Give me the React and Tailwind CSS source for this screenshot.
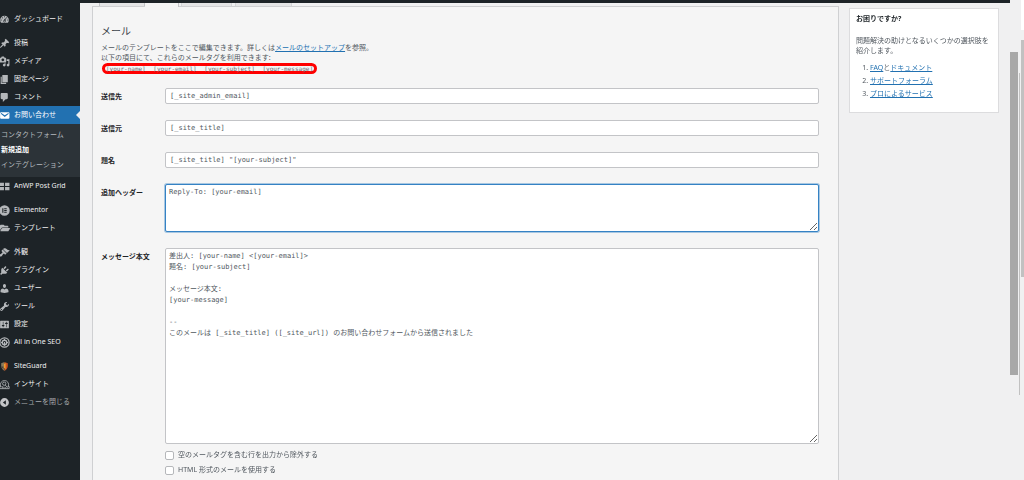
import React from 'react';
import { FaFolderOpen } from 'react-icons/fa';

const ICONS = {
  dashboard:
    'M3.76 16h12.48c1.1-1.37 1.76-3.11 1.76-5 0-4.42-3.58-8-8-8s-8 3.58-8 8c0 1.89.66 3.63 1.76 5zM10 4c.55 0 1 .45 1 1s-.45 1-1 1-1-.45-1-1 .45-1 1-1zM6 6c.55 0 1 .45 1 1s-.45 1-1 1-1-.45-1-1 .45-1 1-1zm8 0c.55 0 1 .45 1 1s-.45 1-1 1-1-.45-1-1 .45-1 1-1zm-5.37 5.55L12 7v6c0 1.1-.9 2-2 2s-2-.9-2-2c0-.57.24-1.08.63-1.45zM4 10c.55 0 1 .45 1 1s-.45 1-1 1-1-.45-1-1 .45-1 1-1zm12 0c.55 0 1 .45 1 1s-.45 1-1 1-1-.45-1-1 .45-1 1-1zm-5 3c0-.55-.45-1-1-1s-1 .45-1 1 .45 1 1 1 1-.45 1-1z',
  pin: 'M10.44 3.02l1.82-1.82 6.36 6.35-1.83 1.82c-1.05-.68-2.48-.57-3.41.36l-.75.75c-.92.93-1.04 2.35-.35 3.41l-1.83 1.82-2.41-2.41-2.8 2.79c-.42.42-3.38 2.71-3.8 2.29s1.86-3.39 2.28-3.81l2.79-2.79L4.1 9.36l1.83-1.82c1.05.69 2.48.57 3.4-.36l.75-.75c.93-.92 1.05-2.35.36-3.41z',
  media:
    'M13 11V4c0-.55-.45-1-1-1h-1.67L9 1H5L3.67 3H2c-.55 0-1 .45-1 1v7c0 .55.45 1 1 1h10c.55 0 1-.45 1-1zM7 4.5c1.38 0 2.5 1.12 2.5 2.5S8.38 9.5 7 9.5 4.5 8.38 4.5 7 5.62 4.5 7 4.5zM14 6h5v10.5c0 1.38-1.12 2.5-2.5 2.5S14 17.88 14 16.5s1.12-2.5 2.5-2.5c.17 0 .34.02.5.05V9h-3V6zm-4 8.05V13h2v3.5c0 1.38-1.12 2.5-2.5 2.5S7 17.88 7 16.5 8.12 14 9.5 14c.17 0 .34.02.5.05z',
  page: 'M6 15V2h10v13H6zm-1 1h8v2H3V5h2v11z',
  comment: 'M5 2h9c1.1 0 2 .9 2 2v7c0 1.1-.9 2-2 2h-2l-5 5v-5H5c-1.1 0-2-.9-2-2V4c0-1.1.9-2 2-2z',
  email:
    'M3.87 4h13.25C18.37 4 19 4.59 19 5.79v8.42c0 1.19-.63 1.79-1.88 1.79H3.87c-1.25 0-1.88-.6-1.88-1.79V5.79c0-1.2.63-1.79 1.88-1.79zm6.62 8.6l6.74-5.53c.24-.2.43-.66.13-1.07-.29-.41-.82-.42-1.17-.17l-5.7 3.86L4.8 5.83c-.35-.25-.88-.24-1.17.17-.3.41-.11.87.13 1.07z',
  grid: 'M1 3h8v6H1zM11 3h8v6h-8zM1 11h8v6H1zM11 11h8v6h-8z',
  elementor: 'M10 .5a9.5 9.5 0 1 0 0 19a9.5 9.5 0 1 0 0-19zM6 6h2v8H6zM9.5 6H14v1.7H9.5zM9.5 9.2H14v1.7H9.5zM9.5 12.3H14V14H9.5z',
  brush:
    'M14.48 11.06L7.41 3.99l1.5-1.5c.5-.56 2.3-.47 3.51.32 1.21.8 1.43 1.28 2.91 2.1 1.18.64 2.45 1.26 4.45.85zm-.71.71L6.7 4.7 4.93 6.47c-.39.39-.39 1.02 0 1.41l1.06 1.06c.39.39.39 1.03 0 1.42-.6.6-1.43 1.11-2.21 1.69-.35.26-.7.53-1.01.84C1.43 14.23.4 16.08 1.4 17.07c.99 1 2.84-.03 4.18-1.36.31-.31.58-.66.85-1.02.57-.78 1.08-1.61 1.69-2.21.39-.39 1.02-.39 1.41 0l1.06 1.06c.39.39 1.02.39 1.41 0z',
  plugin:
    'M13.11 4.36L9.87 7.6 8 5.73l3.24-3.24c.35-.34 1.05-.2 1.56.32.52.51.66 1.21.31 1.55zm-8 1.77l.91-1.12 9.01 9.01-1.19.84c-.71.71-2.63 1.16-3.82 1.16H6.14L4.9 17.26c-.59.59-1.54.59-2.12 0-.59-.58-.59-1.53 0-2.12l1.24-1.24v-3.88c0-1.13.4-3.19 1.09-3.89zm7.26 3.97l3.24-3.24c.34-.35 1.04-.21 1.55.31.52.51.66 1.21.31 1.55l-3.24 3.25z',
  user: 'M10 9.25c-2.27 0-2.73-3.44-2.73-3.44C7 4.02 7.82 2 9.97 2c2.16 0 2.98 2.02 2.71 3.81 0 0-.41 3.44-2.68 3.44zm0 2.57L12.72 10c2.39 0 4.52 2.33 4.52 4.53v2.49s-3.65 1.13-7.24 1.13c-3.65 0-7.24-1.13-7.24-1.13v-2.49c0-2.25 1.94-4.48 4.47-4.48z',
  tools:
    'M16.68 9.77c-1.34 1.34-3.3 1.67-4.95.99l-5.41 6.52c-.99.99-2.59.99-3.58 0s-.99-2.59 0-3.57l6.52-5.42c-.68-1.65-.35-3.61.99-4.95 1.28-1.28 3.12-1.62 4.72-1.06l-2.89 2.89 2.82 2.82 2.86-2.87c.53 1.58.18 3.39-1.08 4.65zM3.81 16.21c.4.39 1.04.39 1.43 0 .4-.4.4-1.04 0-1.43-.39-.4-1.03-.4-1.43 0-.39.39-.39 1.03 0 1.43z',
  settings:
    'M18 16V4c0-.55-.45-1-1-1H3c-.55 0-1 .45-1 1v12c0 .55.45 1 1 1h14c.55 0 1-.45 1-1zM8 11h1c.55 0 1 .45 1 1s-.45 1-1 1H8v1.5c0 .28-.22.5-.5.5s-.5-.22-.5-.5V13H6c-.55 0-1-.45-1-1s.45-1 1-1h1V5.5c0-.28.22-.5.5-.5s.5.22.5.5V11zm5-2h-1c-.55 0-1-.45-1-1s.45-1 1-1h1V5.5c0-.28.22-.5.5-.5s.5.22.5.5V7h1c.55 0 1 .45 1 1s-.45 1-1 1h-1v5.5c0 .28-.22.5-.5.5s-.5-.22-.5-.5V9z',
  collapse: 'M10 2a8 8 0 1 0 0 16a8 8 0 1 0 0-16zM12.5 6v8L7 10z',
};

const Dashicon = ({ name }) => (
  <svg viewBox="0 0 20 20" className="size-[11px]" fill="currentColor" fillRule="evenodd">
    <path d={ICONS[name]} />
  </svg>
);

const SeoIcon = () => (
  <svg viewBox="0 0 20 20" className="size-[11px]" fill="none" stroke="currentColor">
    <circle cx="10" cy="10" r="8.4" strokeWidth="2.2" />
    <circle cx="10" cy="10" r="4" strokeWidth="2.6" />
    <path d="M10 3.5v2M10 9v7M3.5 10h2M14.5 10h2" strokeWidth="1.8" />
  </svg>
);

const ShieldIcon = () => (
  <svg viewBox="0 0 20 20" className="size-[11px]">
    <path d="M4 4l6-2v16c-3-2-6-5-6-9z" fill="#8a7a5c" />
    <path d="M10 2l6 2v5c0 4-3 7-6 9z" fill="#c9501e" />
    <path d="M9 5l3-1v11l-3-3z" fill="#f0a030" />
    <path d="M4 10h4v5z" fill="#4a4038" />
  </svg>
);

const InsightIcon = () => (
  <svg viewBox="0 0 20 20" className="size-[11px]" fill="none" stroke="currentColor" strokeWidth="1.5">
    <path d="M3 13a7.5 7.5 0 1 1 14 0" />
    <path d="M1.5 17.5h17v-4h-3M1.5 17.5v-4h3" />
    <circle cx="9.5" cy="8.5" r="3" />
    <path d="M11.5 11l4 5M6 17v-4M9 17v-3M12 17v-2" />
  </svg>
);

const menuGroups = [
  [{ label: 'ダッシュボード', icon: <Dashicon name="dashboard" /> }],
  [
    { label: '投稿', icon: <Dashicon name="pin" /> },
    { label: 'メディア', icon: <Dashicon name="media" /> },
    { label: '固定ページ', icon: <Dashicon name="page" /> },
    { label: 'コメント', icon: <Dashicon name="comment" /> },
    {
      label: 'お問い合わせ',
      icon: <Dashicon name="email" />,
      active: true,
      children: ['コンタクトフォーム', '新規追加', 'インテグレーション'],
    },
    { label: 'AnWP Post Grid', icon: <Dashicon name="grid" /> },
  ],
  [
    { label: 'Elementor', icon: <Dashicon name="elementor" /> },
    { label: 'テンプレート', icon: <FaFolderOpen className="size-[10px]" /> },
  ],
  [
    { label: '外観', icon: <Dashicon name="brush" /> },
    { label: 'プラグイン', icon: <Dashicon name="plugin" /> },
    { label: 'ユーザー', icon: <Dashicon name="user" /> },
    { label: 'ツール', icon: <Dashicon name="tools" /> },
    { label: '設定', icon: <Dashicon name="settings" /> },
    { label: 'All in One SEO', icon: <SeoIcon /> },
  ],
  [
    { label: 'SiteGuard', icon: <ShieldIcon /> },
    { label: 'インサイト', icon: <InsightIcon /> },
  ],
];

const MenuItem = ({ item }) => (
  <li>
    <a
      href="#"
      className={
        item.active
          ? 'relative flex h-[18px] items-center gap-1 bg-[#2271b1] text-white'
          : 'flex h-[18px] items-center gap-1 text-[#f0f0f1]'
      }
    >
      <span className={item.active ? '-ml-px flex w-[11px] justify-center' : '-ml-px flex w-[11px] justify-center text-[#b4b7ba]'}>
        {item.icon}
      </span>
      {item.label}
      {item.active && (
        <span className="absolute top-[5px] right-0 size-0 border-y-4 border-r-4 border-y-transparent border-r-[#f0f0f1]" />
      )}
    </a>
    {item.children && (
      <ul className="bg-[#2c3338] py-1 text-[#b4b9be]">
        {item.children.map((child) => (
          <li key={child}>
            <a
              href="#"
              className={
                child === '新規追加'
                  ? 'flex h-[15px] items-center pl-px font-bold text-white'
                  : 'flex h-[15px] items-center pl-px'
              }
            >
              {child}
            </a>
          </li>
        ))}
      </ul>
    )}
  </li>
);

const AdminMenu = () => (
  <nav className="w-20 shrink-0 overflow-hidden bg-[#1d2327] pt-[7px] whitespace-nowrap">
    <div className="flex flex-col gap-[6px]">
      {menuGroups.map((group, i) => (
        <ul key={i}>
          {group.map((item) => (
            <MenuItem key={item.label} item={item} />
          ))}
        </ul>
      ))}
    </div>
    <button type="button" className="flex h-[18px] items-center gap-1 text-[#a7aaad]">
      <span className="-ml-px flex w-[11px] justify-center text-[#c3c4c7]">
        <Dashicon name="collapse" />
      </span>
      メニューを閉じる
    </button>
  </nav>
);

const mailTags = ['[your-name]', '[your-email]', '[your-subject]', '[your-message]'];

const fields = [
  { id: 'recipient', label: '送信先', value: '[_site_admin_email]' },
  { id: 'sender', label: '送信元', value: '[_site_title]' },
  { id: 'subject', label: '題名', value: '[_site_title] "[your-subject]"' },
];

const messageBody = `差出人: [your-name] <[your-email]>
題名: [your-subject]

メッセージ本文:
[your-message]

--
このメールは [_site_title] ([_site_url]) のお問い合わせフォームから送信されました
`;

const Row = ({ id, label, children }) => (
  <div className="flex">
    <label htmlFor={id} className="w-16 shrink-0 pt-[3px] leading-[11px] font-bold whitespace-nowrap text-[#1d2327]">
      {label}
    </label>
    <div className="min-w-0 flex-1">{children}</div>
  </div>
);

const MailPanel = () => (
  <div className="min-w-0 flex-1">
    <div className="flex h-[3px] gap-[3px] pl-[7px]">
      <div className="w-[46px] border-x border-[#c3c4c7] bg-[#e4e4e5]" />
      <div className="-mr-px -ml-[3px] h-1 w-[34px] border-r border-[#c3c4c7] bg-[#f5f5f5]" />
      <div className="w-[51px] border-x border-[#d4d5d7] bg-[#e4e4e5]" />
      <div className="w-[57px] border-x border-[#d4d5d7] bg-[#e4e4e5]" />
    </div>
    <section className="border border-[#cfd0d2] bg-[#f5f5f5] pt-4 pr-[19px] pb-10 pl-2">
      <h2 className="text-[10px] leading-4 text-[#3c434a]">メール</h2>
      <p className="mt-1 leading-[10px] text-[#50575e]">
        メールのテンプレートをここで編集できます。詳しくは
        <a href="#" className="text-[#2271b1] underline">メールのセットアップ</a>
        を参照。
        <br />
        以下の項目にて、これらのメールタグを利用できます:
      </p>
      <div className="ml-px flex h-[11px] w-[215px] items-center justify-between rounded-full border-[3px] border-[#ff0000] px-px font-['DejaVu_Sans_Mono','Liberation_Mono',monospace] text-[6px] text-[#646970]">
        {mailTags.map((tag) => (
          <span key={tag}>{tag}</span>
        ))}
      </div>

      <form className="mt-[14px] flex flex-col gap-4">
        {fields.map((field) => (
          <Row key={field.id} id={field.id} label={field.label}>
            <input
              id={field.id}
              type="text"
              defaultValue={field.value}
              className="block h-4 w-full rounded-xs border border-[#c3c4c7] bg-white px-1 font-['DejaVu_Sans_Mono','Noto_Sans_CJK_JP',monospace] text-[#50575e]"
            />
          </Row>
        ))}
        <Row id="headers" label="追加ヘッダー">
          <textarea
            id="headers"
            autoFocus
            defaultValue="Reply-To: [your-email]"
            className="block h-12 w-full rounded-xs border border-[#3582c4] bg-white px-[3px] py-[2px] font-['DejaVu_Sans_Mono','Noto_Sans_CJK_JP',monospace] leading-[11px] text-[#50575e] ring-1 ring-[#3582c4]/40 outline-none"
          />
        </Row>
        <Row id="body" label="メッセージ本文">
          <textarea
            id="body"
            defaultValue={messageBody}
            className="block h-[196px] w-full rounded-xs border border-[#c3c4c7] bg-white px-[3px] py-[2px] font-['DejaVu_Sans_Mono','Noto_Sans_CJK_JP',monospace] leading-[11px] text-[#50575e]"
          />
          <div className="mt-1 text-[#50575e]">
            <label className="flex h-[15px] items-center gap-1">
              <input type="checkbox" className="size-[9px] appearance-none rounded-xs border border-[#b5b7ba] bg-white" />
              空のメールタグを含む行を出力から除外する
            </label>
            <label className="flex h-[15px] items-center gap-1">
              <input type="checkbox" className="size-[9px] appearance-none rounded-xs border border-[#b5b7ba] bg-white" />
              HTML 形式のメールを使用する
            </label>
          </div>
        </Row>
      </form>
    </section>
  </div>
);

const HelpBox = () => (
  <aside className="mt-[5px] w-[150px] shrink-0 self-start border border-[#dcdcde] bg-white px-[6px] pt-1 pb-3 text-[#50575e]">
    <h3 className="leading-[11px] font-bold text-[#1d2327]">お困りですか?</h3>
    <p className="mt-3 leading-[10px]">問題解決の助けとなるいくつかの選択肢を紹介します。</p>
    <ol className="mt-[5px] list-decimal pl-[14px] leading-[13px]">
      <li>
        <a href="#" className="text-[#2271b1] underline">FAQ</a>と
        <a href="#" className="text-[#2271b1] underline">ドキュメント</a>
      </li>
      <li>
        <a href="#" className="text-[#2271b1] underline">サポートフォーラム</a>
      </li>
      <li>
        <a href="#" className="text-[#2271b1] underline">プロによるサービス</a>
      </li>
    </ol>
  </aside>
);

// nested scroll bars of the admin frame and the outer window
const ScrollBars = () => (
  <div className="flex w-[14px] shrink-0 bg-[#f0f0f1]">
    <div className="flex-1 pt-[52px]">
      <div className="h-[323px] bg-[#a8a8a8]" />
    </div>
    <div className="w-[3px] px-px pt-[73px]">
      <div className="h-[322px] bg-[#c1c1c1]" />
    </div>
    <div className="w-[3px]">
      <div className="h-[30px] bg-white" />
      <div className="mt-[10px] h-[237px] bg-[#c1c1c1]" />
    </div>
  </div>
);

export default function App() {
  return (
    <div className="flex h-screen overflow-hidden bg-[#f0f0f1] font-['Noto_Sans','Noto_Sans_CJK_JP',sans-serif] text-[7px]">
      <div className="flex min-w-0 flex-1 flex-col">
        <header className="h-[3px] shrink-0 bg-[#1d2327]" />
        <div className="flex min-h-0 flex-1">
          <AdminMenu />
          <main className="flex min-w-0 flex-1 gap-[10px] pr-[11px] pl-3">
            <MailPanel />
            <HelpBox />
          </main>
        </div>
      </div>
      <ScrollBars />
    </div>
  );
}
